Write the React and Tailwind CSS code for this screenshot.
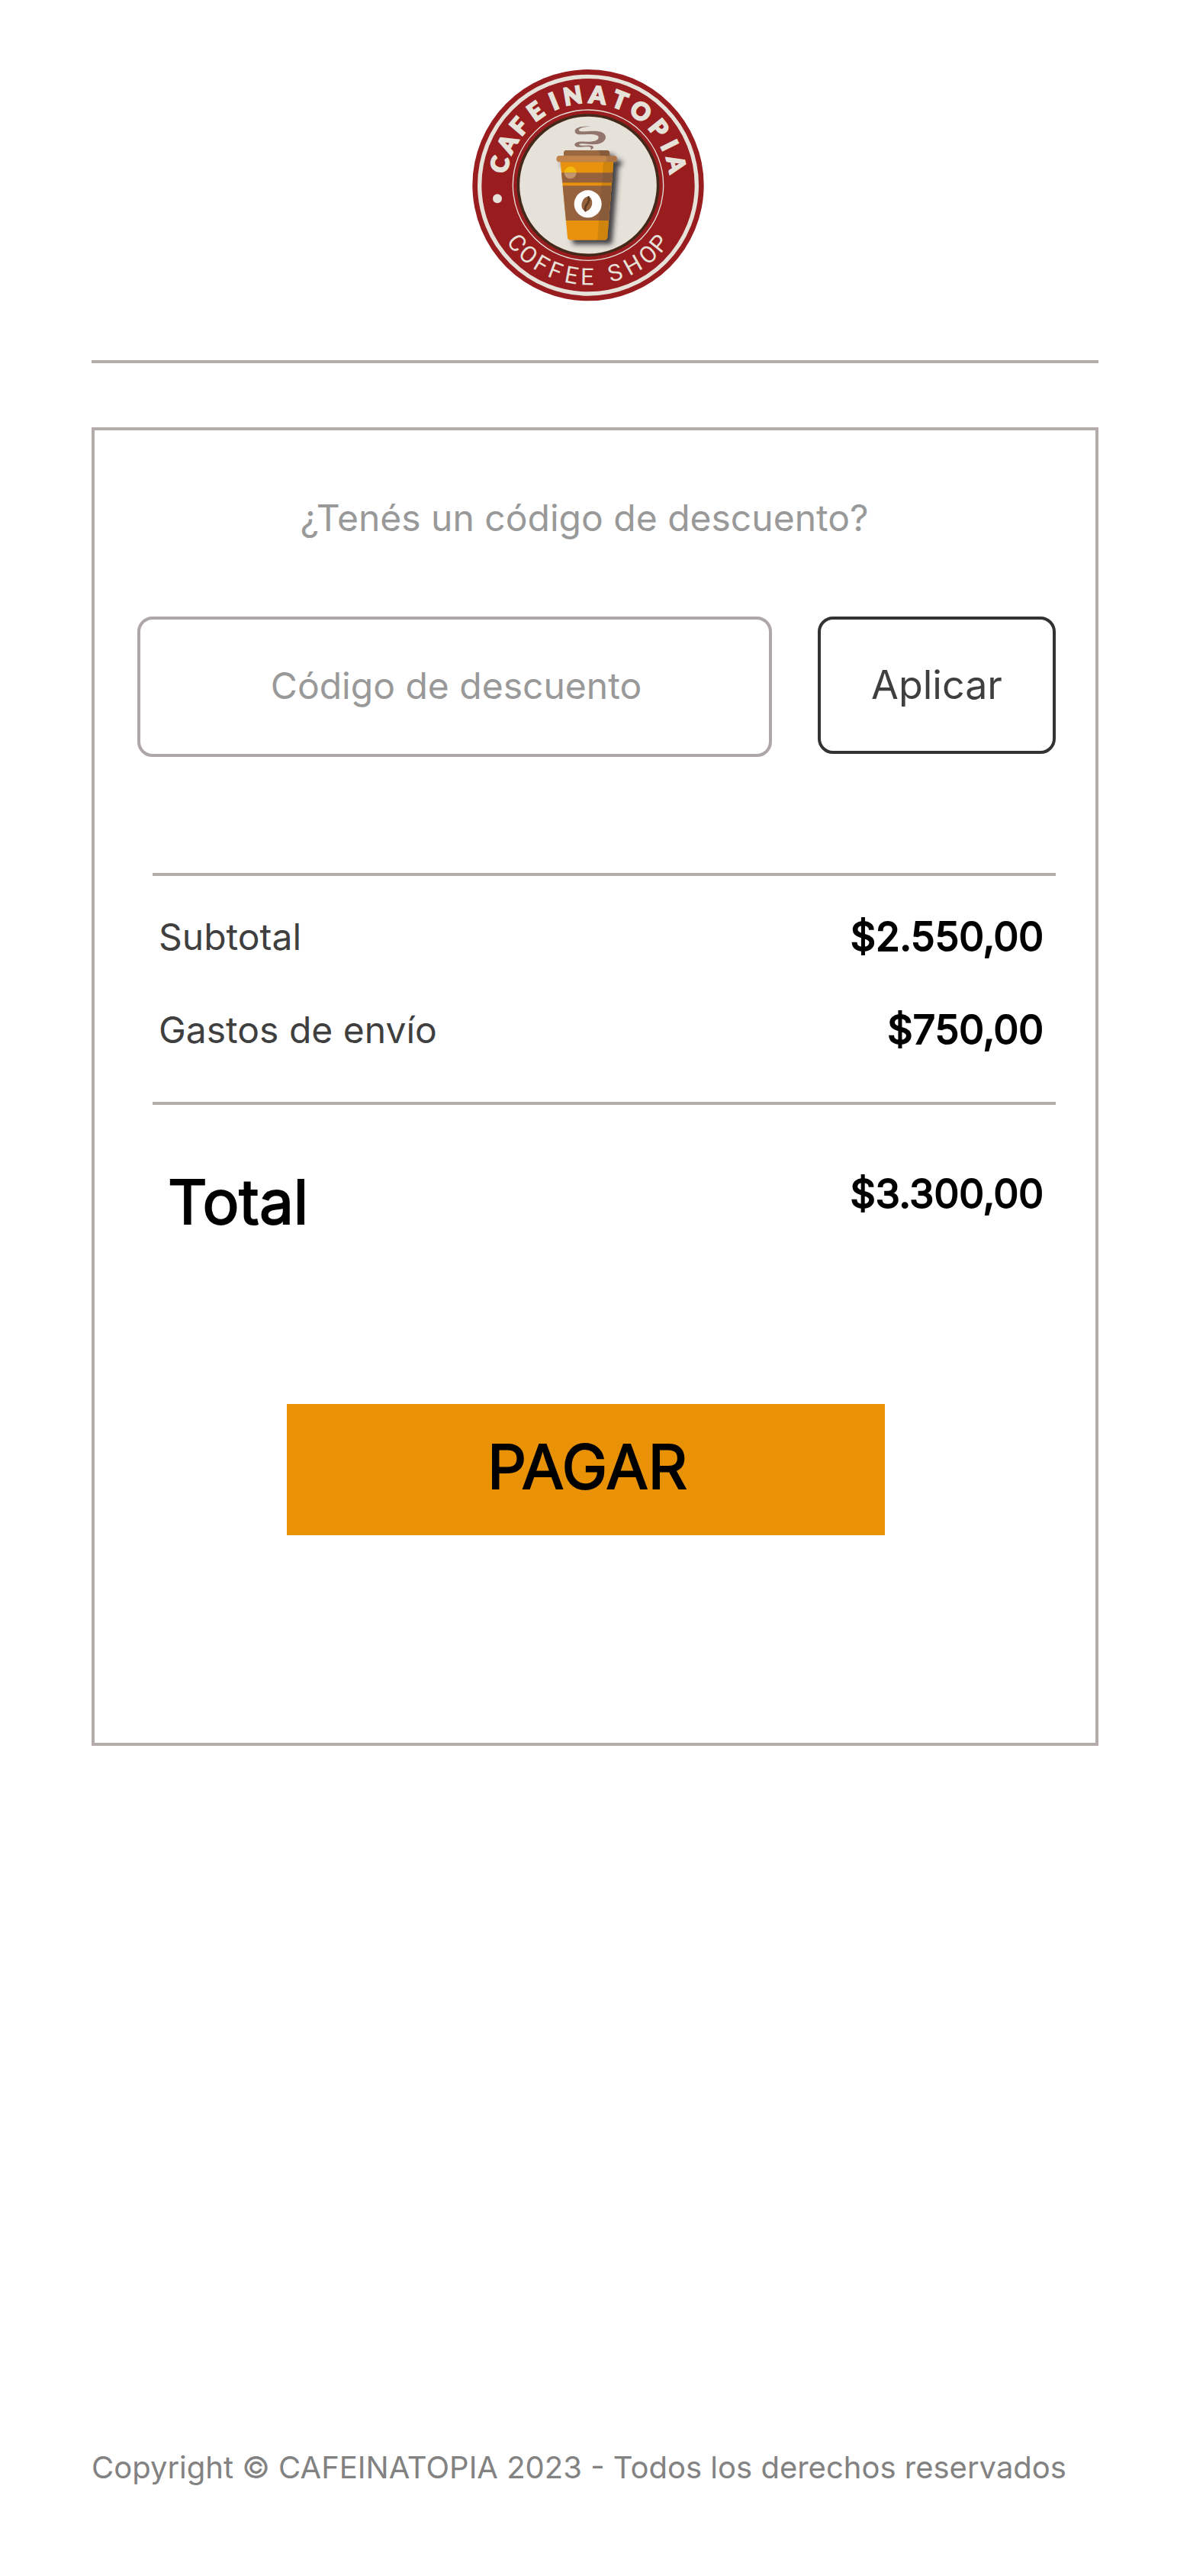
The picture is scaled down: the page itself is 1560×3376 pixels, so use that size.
const CENTER = { x: 512, y: 517 };

// [glyph, angle in degrees, advance width in drawing units]
const TOP_WORD = [
  ["C", -76.7, 64], ["A", -62.6, 69], ["F", -49.3, 56], ["E", -35.3, 56],
  ["I", -22.2, 29], ["N", -9.7, 73], ["A", 6.2, 69], ["T", 20.7, 58],
  ["O", 35.7, 78], ["P", 51.3, 60], ["I", 63.9, 29], ["A", 76.9, 69],
];
const BOTTOM_WORD = [
  ["C", -51, 60], ["O", -40.8, 63], ["F", -30.5, 51], ["F", -20.9, 51],
  ["E", -10.5, 52], ["E", -0.6, 52], [" ", 8, 23], ["S", 17.2, 55],
  ["H", 29.3, 66], ["O", 40.8, 63], ["P", 50.5, 58],
];

function ring(glyphs, radius, side) {
  const spots = glyphs.map(([, deg, w]) => {
    const a = (deg * Math.PI) / 180;
    return {
      x: CENTER.x + radius * Math.sin(a) - (w / 2) * Math.cos(a),
      y: CENTER.y - side * radius * Math.cos(a) - side * (w / 2) * Math.sin(a),
      r: side * deg,
    };
  });
  return {
    x: spots.map((s) => s.x.toFixed(1)).join(" "),
    y: spots.map((s) => s.y.toFixed(1)).join(" "),
    rotate: spots.map((s) => s.r).join(" "),
  };
}

function Logo() {
  return (
    <svg viewBox="56 62 912 912" className="size-[304px]" role="img" aria-label="Cafeinatopia Coffee Shop">
      <defs>
        <filter id="cupShadow" x="-30%" y="-30%" width="170%" height="170%">
          <feDropShadow dx="19" dy="17" stdDeviation="10" floodColor="#26262c" floodOpacity="0.85" />
        </filter>
        <clipPath id="cupBody">
          <path d="M403 424H612L588 722Q587 733 576 733H442Q432 733 431 722Z" />
        </clipPath>
      </defs>
      <circle cx="512" cy="517" r="455" fill="#991c1f" />
      <circle cx="512" cy="517" r="427" fill="none" stroke="#e6e1d9" strokeWidth="16" />
      <circle cx="512" cy="517" r="296" fill="none" stroke="#e6e1d9" strokeWidth="4" />
      <circle cx="512" cy="517" r="275" fill="#e6e1d9" stroke="#44291a" strokeWidth="11" />
      <text
        {...ring(TOP_WORD, 323, 1)}
        fill="#e6e1d9"
        stroke="#e6e1d9"
        strokeWidth="6"
        className="font-['Lato'] text-[94px] font-black"
      >
        CAFEINATOPIA
      </text>
      <text {...ring(BOTTOM_WORD, 392, -1)} fill="#e6e1d9" className="font-['Roboto'] text-[92px]">
        COFFEE SHOP
      </text>
      <circle cx="155" cy="570" r="18" fill="#e6e1d9" />

      <path
        d="M521 286C490 283 461 291 460 303C459 321 484 318 510 317C535 316 553 319 553 329C553 344 527 347 500 346C478 345 459 348 459 358C460 369 482 368 503 366C518 365 527 366 521 378C532 375 536 368 531 364C524 358 505 361 488 361C474 361 472 355 486 354C505 353 520 358 543 356C566 354 581 342 581 328C580 311 562 304 535 304C512 304 492 308 479 304C469 300 480 287 521 286Z"
        fill="#92766e"
      />
      <g filter="url(#cupShadow)">
        <rect x="416" y="380" width="181" height="34" rx="11" fill="#875c3a" />
        <path d="M427 380H548Q558 382 558 392V410H416V391Q416 380 427 380Z" fill="#9b693f" />
        <g clipPath="url(#cupBody)">
          <rect x="400" y="420" width="220" height="320" fill="#e8920a" />
          <rect x="400" y="468" width="220" height="39" fill="#96623d" />
          <rect x="400" y="519" width="220" height="137" fill="#96623d" />
          <path d="M573 420H620V740H548Z" fill="#3a3030" fillOpacity="0.14" />
        </g>
        <rect x="388" y="402" width="238" height="24" rx="12" fill="#ad7545" />
        <rect x="388" y="402" width="198" height="24" rx="12" fill="#c1844b" />
      </g>
      <path d="M418 468A24 24 0 1 1 466 468Z" fill="#f2b90f" />
      <path d="M418 468A24 24 0 0 0 466 468Z" fill="#c2956f" />
      <circle cx="511" cy="591" r="54" fill="#fdfdfd" />
      <g transform="rotate(14 507 591)">
        <ellipse cx="507" cy="591" rx="20" ry="29" fill="#96623d" />
        <path d="M507 563C515 576 512 584 508 592C504 600 503 609 508 618" fill="none" stroke="#5f3b22" strokeWidth="8" strokeLinecap="round" />
      </g>
    </svg>
  );
}

function Amount({ children, className = "leading-[60px]" }) {
  return <dd className={`text-[52px] text-black [-webkit-text-stroke:2px_black] ${className}`}>{children}</dd>;
}

function Row({ label, value }) {
  return (
    <div className="flex items-center justify-between pr-4 pl-2">
      <dt className="text-5xl leading-[60px] text-[#3f3f3f]">{label}</dt>
      <Amount>{value}</Amount>
    </div>
  );
}

export default function App() {
  return (
    <div className="flex min-h-screen flex-col bg-white px-[120px] font-['Inter',sans-serif]">
      <header className="flex justify-center border-b-4 border-[#b4acab] pt-[91px] pr-[18px] pb-[77px]">
        <Logo />
      </header>

      <main className="mt-[84px] flex flex-col border-4 border-[#b4acab] pt-[85px] pr-[52px] pb-[272px] pl-[56px]">
        <label htmlFor="codigo" className="pr-8 text-center text-5xl leading-[60px] text-[#999999]">
          ¿Tenés un código de descuento?
        </label>
        <form className="mt-[99px] flex items-start gap-[60px]" onSubmit={(e) => e.preventDefault()}>
          <input
            id="codigo"
            type="text"
            placeholder="Código de descuento"
            className="h-[184px] min-w-0 flex-1 rounded-[20px] border-4 border-[#aea7a7] pb-1 pl-1 text-center text-5xl text-[#3f3f3f] placeholder:text-[#999999]"
          />
          <button type="submit" className="h-[180px] w-[312px] rounded-[20px] border-4 border-[#333333] text-[52px] text-[#3f3f3f]">
            Aplicar
          </button>
        </form>

        <dl className="mt-[152px] ml-5">
          <div className="flex flex-col gap-[62px] border-y-4 border-[#b4acab] pt-[50px] pb-[64px]">
            <Row label="Subtotal" value="$2.550,00" />
            <Row label="Gastos de envío" value="$750,00" />
          </div>
          <div className="flex items-start justify-between pt-[79px] pr-4 pl-5">
            <dt className="text-[80px] leading-[96px] text-black [-webkit-text-stroke:2px_black]">Total</dt>
            <Amount className="leading-[76px]">$3.300,00</Amount>
          </div>
        </dl>

        <button
          type="button"
          className="mt-[217px] mr-[224px] ml-[196px] h-[172px] bg-[#e99206] pb-2 pl-1 text-[80px] text-black [-webkit-text-stroke:2px_black]"
        >
          PAGAR
        </button>
      </main>

      <footer className="mt-auto pb-[118px] text-[40px] leading-[48px] text-[#828282]">
        Copyright © CAFEINATOPIA 2023 - Todos los derechos reservados
      </footer>
    </div>
  );
}
